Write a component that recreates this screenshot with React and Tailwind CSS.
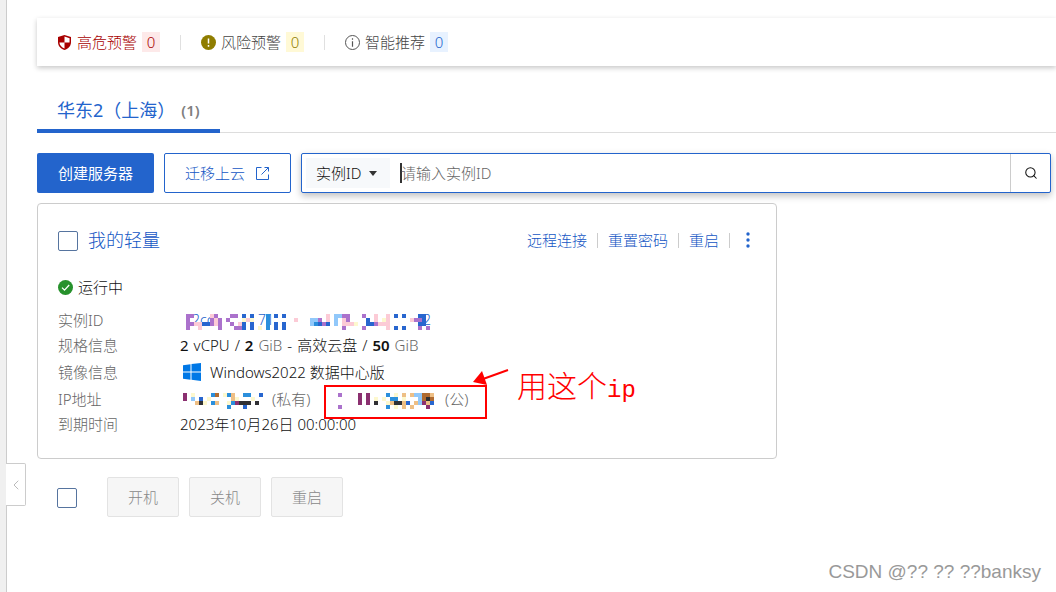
import { useState } from 'react';
import { ChevronLeft, Search } from 'lucide-react';

const MOSAIC_COLORS = {
  v: '#ab72cc',
  b: '#2866cf',
  p: '#fccbd6',
  c: '#2b8fdc',
  l: '#91c8fa',
  y: '#fdf8ce',
  m: '#8b3070',
  n: '#b06b30',
  o: '#eebf85',
  k: '#303034',
};

const INSTANCE_ID = [
  '.vv....pv...vv.b.b...c.b.b..........p.llvv...v..p..p.b.b...bb.',
  '.v.....vpv.v...ypy...c......p...llv.p.l.pv....b.p.yp.....pvvb.',
  '.vvppbbvpv..v.pb.b...c.b.b......lcbvb.l.pppy..bbvppp.......bb.',
  '.v..p....v...vvb.b.y.c.b.b..............v....v.....p.b.b...v.v',
];

const PRIVATE_IP = [
  'm.y....cn.yco..cc..b',
  'm.l.b.y.....oy...y..',
  '...oky.co..ycmkkk.k.',
  '...........c...b....',
];

const PUBLIC_IP = [
  'v....m.m....c.y.o.ollnno',
  '.....m.m.y.y.cc.y...lnkn',
  '.....m.m.k..yokkob.olmob',
  'v...........c.y.o.o...m.',
];

const ALERTS = [
  { label: '高危预警', icon: ShieldIcon, text: 'text-[#a80000]', badge: 'bg-[#fde9e9] text-[#a80000]' },
  { label: '风险预警', icon: WarnIcon, text: 'text-[#444]', badge: 'bg-[#fff9d6] text-[#8f7d00]' },
  { label: '智能推荐', icon: InfoIcon, text: 'text-[#444]', badge: 'bg-[#e8f2ff] text-[#2364cc]' },
];

function ShieldIcon() {
  return (
    <svg viewBox="0 0 15 15" className="h-[15px] w-[15px]" aria-hidden="true">
      <path d="M7.5 0 14 2v5c0 4-2.6 6.6-6.5 8C3.600 13.600 1 11 1 7V2z" fill="#a80000" />
      <path d="M7.500 1.600v5.900h5c.1-.6.1-3 .1-4.300zM7.500 7.500H2.400c.3 2.800 2.100 4.800 5.100 6z" fill="#fff" />
    </svg>
  );
}

function WarnIcon() {
  return (
    <svg viewBox="0 0 15 15" className="h-[15px] w-[15px]" aria-hidden="true">
      <circle cx="7.5" cy="7.5" r="7.500" fill="#8f7d00" />
      <path d="M7.500 3.500v5M7.500 10v1.700" stroke="#fff" strokeWidth="1.500" />
    </svg>
  );
}

function InfoIcon() {
  return (
    <svg viewBox="0 0 15 15" className="h-[15px] w-[15px]" aria-hidden="true">
      <circle cx="7.5" cy="7.5" r="7" fill="none" stroke="#555" />
      <path d="M7.500 3.200v1.500M7.500 6.200v5.600" stroke="#555" strokeWidth="1.200" />
    </svg>
  );
}

function CheckIcon() {
  return (
    <svg viewBox="0 0 15 15" className="h-[15px] w-[15px]" aria-hidden="true">
      <circle cx="7.5" cy="7.5" r="7.500" fill="#27912c" />
      <path d="m4 7.600 2.500 2.500L11.200 5" fill="none" stroke="#fff" strokeWidth="1.300" />
    </svg>
  );
}

function WindowsIcon() {
  return (
    <svg viewBox="0 0 18 18" className="h-[18px] w-[18px]" fill="#0078e6" aria-hidden="true">
      <path d="M0 2.300 7.500 1.300V8.500H0zM8.500 1.100 18 0v8.500H8.500zM0 9.500h7.500v7.200L0 15.700zM8.500 9.500H18V18l-9.500-1.200z" />
    </svg>
  );
}

function ExternalLinkIcon() {
  return (
    <svg viewBox="0 0 15 15" className="h-[15px] w-[15px]" fill="none" stroke="#2364cc" aria-hidden="true">
      <path d="M6.500 1.500h-5v12h12v-5M9.500 1.500h4v4M13.500 1.500 6.500 8.500" />
    </svg>
  );
}

function Mosaic({ rows, className }) {
  const width = rows[0].length * 4;
  return (
    <svg viewBox={`0 0 ${width} 16`} width={width} height="16" className={className} shapeRendering="crispEdges">
      {rows.map((row, y) =>
        [...row].map((cell, x) =>
          MOSAIC_COLORS[cell] ? (
            <rect key={`${x}-${y}`} x={x * 4} y={y * 4} width="4" height="4" fill={MOSAIC_COLORS[cell]} />
          ) : null
        )
      )}
    </svg>
  );
}

function Divider() {
  return <span className="h-[15px] w-px bg-[#ccc]" />;
}

function Checkbox({ label }) {
  return (
    <input
      type="checkbox"
      aria-label={label}
      className="mt-[2px] h-5 w-5 shrink-0 appearance-none rounded-[2px] border border-[#56749f] bg-white checked:bg-[#2364cc]"
    />
  );
}

function AlertBar() {
  return (
    <div className="flex h-12 items-center gap-5 bg-white px-5 shadow-[0_2px_5px_rgba(0,0,0,0.22)]">
      {ALERTS.map(({ label, icon: Icon, text, badge }, i) => (
        <div key={label} className="flex items-center gap-5">
          {i > 0 && <span className="h-[15px] w-px bg-[#e0e0e0]" />}
          <a href="#" className={`flex items-center gap-[5px] ${text}`}>
            <Icon />
            {label}
            <span className={`flex h-5 w-[18px] items-center justify-center ${badge}`}>0</span>
          </a>
        </div>
      ))}
    </div>
  );
}

function Toolbar() {
  const [query, setQuery] = useState('');

  return (
    <div className="mt-5 mr-[5px] flex h-10 gap-[10px]">
      <button className="shrink-0 rounded-[2px] bg-[#2364cc] px-[21px] font-normal text-white">创建服务器</button>
      <button className="flex shrink-0 items-center gap-[10px] rounded-[2px] border border-[#2364cc] px-5 text-[#1456c4]">
        迁移上云
        <ExternalLinkIcon />
      </button>
      <div className="flex min-w-0 flex-1 rounded-[2px] border border-[#2364cc] bg-white shadow-[0_3px_7px_rgba(0,0,0,0.25)]">
        <div className="relative my-1 ml-1 flex shrink-0 items-center bg-[#f7f9fb]">
          <select aria-label="搜索类型" className="h-[30px] w-[84px] appearance-none bg-transparent pl-[10px] outline-none">
            <option>实例ID</option>
          </select>
          <svg viewBox="0 0 8 5" className="pointer-events-none absolute right-[13px] h-[5px] w-2" fill="#333" aria-hidden="true">
            <path d="M0 0h8L4 5z" />
          </svg>
        </div>
        <div className="flex flex-1 items-center pl-[10px]">
          <span className="h-5 w-[2px] bg-[#333]" />
          <input
            value={query}
            onChange={e => setQuery(e.target.value)}
            aria-label="实例ID"
            placeholder="请输入实例ID"
            className="-ml-px h-full w-full bg-transparent outline-none placeholder:text-[#666]"
          />
        </div>
        <button aria-label="搜索" className="flex w-10 items-center justify-center border-l border-[#ccc]">
          <Search className="h-[14px] w-[14px]" strokeWidth={1.8} />
        </button>
      </div>
    </div>
  );
}

function InstanceCard() {
  return (
    <section className="relative mt-[10px] max-w-[740px] rounded-[4px] border border-[#ccc] bg-white px-5 pt-5 pb-[22px]">
      <div className="flex h-8 items-center justify-between text-[#1456c4]">
        <div className="flex items-center gap-[10px]">
          <Checkbox label="我的轻量" />
          <a href="#" className="text-lg">我的轻量</a>
        </div>
        <div className="flex items-center gap-[10px]">
          <a href="#">远程连接</a>
          <Divider />
          <a href="#">重置密码</a>
          <Divider />
          <a href="#">重启</a>
          <Divider />
          <button aria-label="更多" className="flex w-4 justify-center">
            <svg viewBox="0 0 4 16" className="h-4 w-1" fill="#2364cc" aria-hidden="true">
              <circle cx="2" cy="2" r="1.700" />
              <circle cx="2" cy="8" r="1.700" />
              <circle cx="2" cy="14" r="1.700" />
            </svg>
          </button>
        </div>
      </div>

      <p className="mt-[18px] flex h-[26px] items-center gap-[5px]">
        <CheckIcon />
        运行中
      </p>

      <dl className="mt-[7px] grid grid-cols-[122px_1fr] grid-rows-[25px_25px_29px_25px_25px] items-center whitespace-nowrap">
        <dt className="text-[#666]">实例ID</dt>
        <dd className="relative text-[#2364cc]">
          <span className="absolute top-0 left-[12px] text-sm">2cc</span>
          <span className="absolute top-0 left-[78px] text-sm">71</span>
          <span className="absolute top-0 left-[243px] text-sm">2</span>
          <Mosaic rows={INSTANCE_ID} className="relative mt-1 ml-[2px]" />
        </dd>

        <dt className="text-[#666]">规格信息</dt>
        <dd className="flex gap-[5px]">
          <b>2</b>
          <span>vCPU</span>
          <span>/</span>
          <b className="font-semibold">2</b>
          <span className="text-[#666]">GiB</span>
          <span>-</span>
          <span>高效云盘</span>
          <span>/</span>
          <b className="font-semibold">50</b>
          <span className="text-[#666]">GiB</span>
        </dd>

        <dt className="text-[#666]">镜像信息</dt>
        <dd className="flex items-center gap-[9px] pl-[3px]">
          <WindowsIcon />
          Windows2022 数据中心版
        </dd>

        <dt className="text-[#666]">IP地址</dt>
        <dd className="flex items-center pl-[3px] text-[#666]">
          <Mosaic rows={PRIVATE_IP} className="mt-1" />
          <span className="ml-[9px] w-[66px]">(私有)</span>
          <Mosaic rows={PUBLIC_IP} className="mt-1" />
          <span className="ml-[11px]">(公)</span>
        </dd>

        <dt className="text-[#666]">到期时间</dt>
        <dd>2023年10月26日 00:00:00</dd>
      </dl>

      {/* hand-drawn note over the public address */}
      <div className="pointer-events-none absolute top-[181px] left-[286px] h-[34px] w-[163px] border-2 border-[#f00]" />
      <svg viewBox="0 0 36 18" className="pointer-events-none absolute top-[164px] left-[435px] h-[18px] w-9" aria-hidden="true">
        <path d="M35 2 10 11" stroke="#f00" strokeWidth="2" />
        <path d="M0 14 9 3l5 14z" fill="#f00" />
      </svg>
      <p className="pointer-events-none absolute top-[165px] left-[479px] font-['Liberation_Mono','Noto_Sans_CJK_SC',monospace] text-2xl leading-10 text-[#f00]">
        <span className="text-[30px]">用这个</span>ip
      </p>
    </section>
  );
}

export default function App() {
  return (
    <div className="relative flex min-h-screen overflow-hidden bg-white font-['Noto_Sans','Noto_Sans_CJK_SC',sans-serif] text-[15px] leading-6 font-light text-[#111]">
      <div className="w-[7px] shrink-0 border-r border-[#ccc] bg-[#f0f0f0]" />
      <button
        aria-label="收起"
        className="absolute top-[463px] left-[6px] flex h-[43px] w-5 items-center justify-center rounded-r-[2px] border border-l-0 border-[#ccc] bg-white text-[#bbb]"
      >
        <ChevronLeft className="h-4 w-4" strokeWidth={1.5} />
      </button>

      <main className="min-w-0 flex-1 pt-[18px] pl-[30px]">
        <AlertBar />

        <nav className="mt-[22px] flex border-b border-[#ddd]">
          <a href="#" className="-mb-px flex h-[45px] items-center gap-[6px] border-b-4 border-[#2364cc] px-5 pt-[2px]">
            <span className="text-lg font-normal text-[#2364cc]">华东2（上海）</span>
            <span className="font-semibold text-[#808080]">(1)</span>
          </a>
        </nav>

        <Toolbar />
        <InstanceCard />

        <div className="mt-[18px] flex h-10 items-center pl-5">
          <Checkbox label="全选" />
          <div className="ml-[30px] flex h-full gap-[10px]">
            {['开机', '关机', '重启'].map(action => (
              <button key={action} disabled className="w-[72px] rounded-[2px] border border-[#e3e3e3] bg-[#f6f6f6] text-[#888]">
                {action}
              </button>
            ))}
          </div>
        </div>
      </main>

      <p className="absolute right-[15px] bottom-[6px] font-['Liberation_Sans',sans-serif] text-[19px] leading-7 font-normal text-[#999]">
        CSDN @?? ?? ??banksy
      </p>
    </div>
  );
}
